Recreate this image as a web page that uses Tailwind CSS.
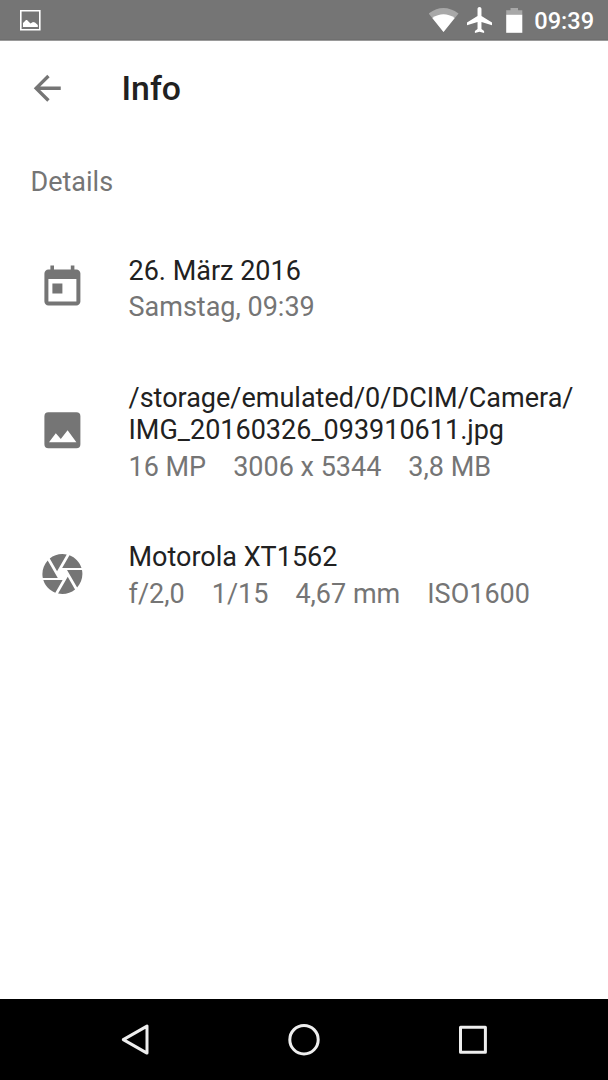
<!DOCTYPE html>
<html lang="de">
<head>
<meta charset="utf-8">
<title>Info</title>
<script src="https://cdn.jsdelivr.net/npm/@tailwindcss/browser@4"></script>
</head>
<body class="flex h-[1080px] w-[608px] flex-col overflow-hidden bg-white font-['Roboto',sans-serif] text-[27px] leading-8 text-[#757575]">
  <div class="flex h-[40px] shrink-0 items-start bg-[#757575] text-white shadow-[0_1px_0_#9a9a9a,inset_0_-1px_0_#6f6f6f]">
    <svg class="mt-[10px] ml-5 h-[21px] w-[21px]" viewBox="0 0 21 21"><path d="M.8.8h19v19H.8z" fill="none" stroke="#fff" stroke-width="1.6"/><path d="M3 17v-4l3-3h1l3.5 3.5 2.5-1.5 2 .5 2.8 2.5v2z" fill="#fff"/></svg>
    <svg class="mt-2 ml-auto h-[25px] w-[30px]" viewBox="0.5 0 30 25"><path d="M0 5.5Q15-5.5 30 5.5L15 24z" fill="#a8a8a8"/><path d="M3.8 10Q15 2.5 26.2 10L15 24z" fill="#fff"/></svg>
    <svg class="mt-[7px] ml-[8.5px] h-[26px] w-[25px]" viewBox="2 2 19 20" preserveAspectRatio="none"><path fill="#fff" d="M21 16v-2l-8-5V3.5c0-.83-.67-1.5-1.5-1.5S10 2.67 10 3.5V9l-8 5v2l8-2.5V19l-2 1.5V22l3.5-1 3.5 1v-1.5L13 19v-5.5l8 2.5z"/></svg>
    <svg class="mt-2 ml-[13.5px] h-[25px] w-[17px]" viewBox="0 0 17 25"><path d="M.2 2.2H4.5V0H12v2.2h4.3V7H.2z" fill="#a8a8a8"/><path d="M.2 6.8h16.1v18H.2z" fill="#fff"/></svg>
    <div class="mt-[7px] mr-[13.9px] ml-[11.5px] text-[23.6px] leading-7 font-medium">09:39</div>
  </div>
  <header class="flex h-[96px] shrink-0 items-center pl-[27px]">
    <svg class="h-[40.5px] w-[40.5px]" viewBox="0 0 24 24"><path fill="#757575" d="M20 11H7.83l5.59-5.59L12 4l-8 8 8 8 1.41-1.41L7.83 13H20v-2z"/></svg>
    <h1 class="mt-[2px] ml-[54px] text-[33.8px] leading-10 font-medium text-[#212121]">Info</h1>
  </header>
  <main class="grow">
    <h2 class="mt-[30px] pl-[30.5px]">Details</h2>
    <div class="mt-[57px] flex flex-col gap-[58px]">
      <section class="flex items-center pl-[38px]">
        <svg class="-mt-[5px] h-12 w-12 shrink-0" viewBox="-.2 -.25 24 24"><path fill="#757575" d="M19 3h-1V1h-1.8v2H7.8V1H6v2H5c-1.11 0-1.99.9-1.99 2L3 19c0 1.1.89 2 2 2h14c1.1 0 2-.9 2-2V5c0-1.1-.9-2-2-2zm0 16H5V7.8h14v11.2zM7 10h5v5H7z"/></svg>
        <div class="ml-[42.5px]">
          <p class="text-[#212121]">26. März 2016</p>
          <p class="mt-1 mb-px">Samstag, 09:39</p>
        </div>
      </section>
      <section class="flex items-center pl-[38px]">
        <svg class="-mt-[5px] h-12 w-12 shrink-0" viewBox="-.2 -.1 24 24"><path fill="#757575" fill-rule="evenodd" d="M5 3h14a2 2 0 0 1 2 2v14a2 2 0 0 1-2 2H5a2 2 0 0 1-2-2V5a2 2 0 0 1 2-2zM5.3 18h13.7l-4.4-6-3.4 4.4-2.5-2.9z"/></svg>
        <div class="ml-[42.5px]">
          <p class="text-[#212121]">/storage/emulated/0/DCIM/Camera/<br>IMG_20160326_093910611.jpg</p>
          <p class="mt-[5px] flex gap-[27px] whitespace-nowrap"><span>16 MP</span><span>3006 x 5344</span><span>3,8 MB</span></p>
        </div>
      </section>
      <section class="flex items-center pl-[38px]">
        <svg class="-mt-[4px] h-12 w-12 shrink-0" viewBox="-.2 0 24 24"><path fill="#757575" d="M9.4 10.5l4.77-8.26C13.47 2.09 12.75 2 12 2c-2.4 0-4.6.85-6.32 2.25l3.66 6.35.06-.1zM21.54 9c-.92-2.92-3.15-5.26-6-6.34L11.88 9h9.66zm.26 1h-7.49l.29.5 4.76 8.25C21 16.97 22 14.61 22 12c0-.69-.07-1.35-.2-2zM8.54 12l-3.9-6.75C3.01 7.03 2 9.39 2 12c0 .69.07 1.35.2 2h7.49l-1.15-2zm-6.08 3c.92 2.92 3.15 5.26 6 6.34L12.12 15H2.46zm11.27 0l-3.9 6.76c.7.15 1.42.24 2.17.24 2.4 0 4.6-.85 6.32-2.25l-3.66-6.35-.93 1.6z"/></svg>
        <div class="ml-[42.5px]">
          <p class="text-[#212121]">Motorola XT1562</p>
          <p class="mt-[5px] flex gap-[27px] whitespace-nowrap"><span>f/2,0</span><span>1/15</span><span>4,67 mm</span><span>ISO1600</span></p>
        </div>
      </section>
    </div>
  </main>
  <nav class="flex h-[81px] shrink-0 items-center justify-center gap-[137px] bg-black">
    <svg class="h-8 w-8" viewBox="0 0 32 32"><path d="M4.3 15.6 28 2.1v27z" fill="none" stroke="#eee" stroke-width="3" stroke-linejoin="round"/></svg>
    <svg class="h-8 w-8" viewBox="0 0 32 32"><circle cx="16" cy="15.7" r="14.2" fill="none" stroke="#eee" stroke-width="3"/></svg>
    <svg class="h-8 w-8" viewBox="0 0 32 32"><path d="M3.5 3.3h24.9v24.9H3.5z" fill="none" stroke="#eee" stroke-width="3" stroke-linejoin="round"/></svg>
  </nav>
</body>
</html>
